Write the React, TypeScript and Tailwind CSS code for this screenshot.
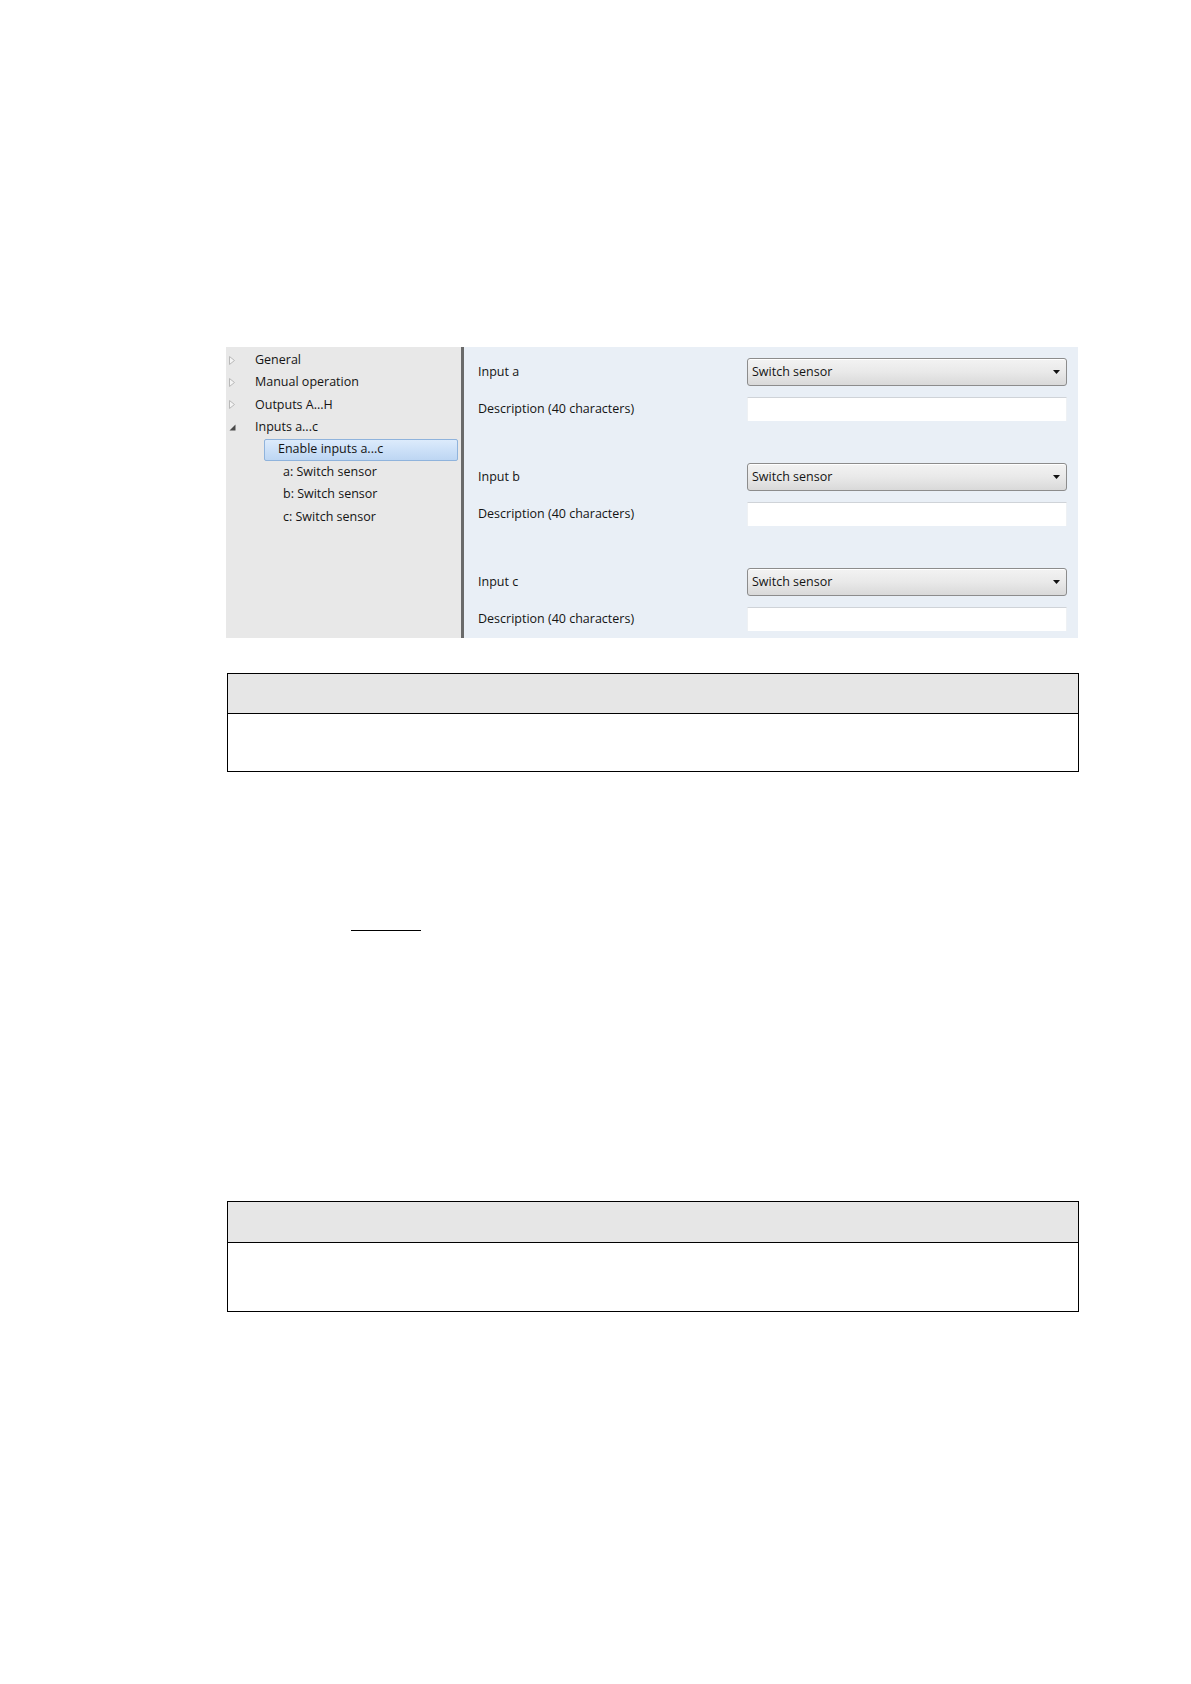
import React from 'react'

const font = { fontFamily: '"Open Sans", "Noto Sans", "Liberation Sans", sans-serif' }

function Collapsed() {
  return (
    <svg width="6" height="9" viewBox="0 0 6 9" aria-hidden="true">
      <polygon points="0.5,0.5 5.5,4.5 0.5,8.5" fill="#f4f4f4" stroke="#b8b8b8" strokeWidth="1" />
    </svg>
  )
}

function Expanded() {
  return (
    <svg width="7" height="7" viewBox="0 0 7 7" aria-hidden="true">
      <polygon points="6.5,0.5 6.5,6.5 0.5,6.5" fill="#4a4a4a" />
    </svg>
  )
}

function TreeRow({ label, icon }: { label: string; icon: 'closed' | 'open' }) {
  return (
    <div className="h-[22.4px] flex items-center">
      <div className="w-[29px] pl-[3px] flex items-center">
        {icon === 'closed' ? <Collapsed /> : <Expanded />}
      </div>
      <span>{label}</span>
    </div>
  )
}

function Dropdown() {
  return (
    <div className="h-[28px] rounded-[3px] border border-[#8c8c8c] bg-gradient-to-b from-[#f3f3f3] via-[#e9e9e9] to-[#d9d9d9] flex items-center justify-between pl-[4px] pr-[6px] shadow-[inset_0_1px_0_#ffffff]">
      <span>Switch sensor</span>
      <svg width="7" height="4" viewBox="0 0 7 4" aria-hidden="true">
        <polygon points="0,0 7,0 3.5,4" fill="#111" />
      </svg>
    </div>
  )
}

function Group({ name }: { name: string }) {
  return (
    <div className="grid grid-cols-[269px_320px] gap-y-[11px] items-center">
      <span>{name}</span>
      <Dropdown />
      <span>Description (40 characters)</span>
      <div className="h-[24px] bg-white border-t border-[#cfd3d8] border-x border-x-[#eef1f4]" />
    </div>
  )
}

function Table({ head, body }: { head: string; body: string }) {
  return (
    <div className="ml-[1px] w-[852px] border-[1.5px] border-black">
      <div className={`${head} bg-[#e6e6e6] border-b-[1.5px] border-black`} />
      <div className={`${body} bg-white`} />
    </div>
  )
}

export default function App() {
  return (
    <div className="w-[1191px] min-h-[1684px] bg-white text-[12.5px] text-[#141414]" style={font}>
      <div className="pl-[226px] pt-[347px]">
        <div className="w-[852px] h-[291px] flex">
          <div className="w-[235px] bg-[#e8e8e8] pt-[2px]">
            <TreeRow label="General" icon="closed" />
            <TreeRow label="Manual operation" icon="closed" />
            <TreeRow label="Outputs A...H" icon="closed" />
            <TreeRow label="Inputs a...c" icon="open" />
            <div className="h-[22.4px] flex items-center pl-[38px] pr-[3px]">
              <div className="w-full h-[22px] rounded-[2px] border border-[#8fb3dc] bg-gradient-to-b from-[#dcebfc] to-[#bdd6f3] flex items-center pl-[13px]">
                Enable inputs a...c
              </div>
            </div>
            {['a: Switch sensor', 'b: Switch sensor', 'c: Switch sensor'].map(t => (
              <div key={t} className="h-[22.4px] flex items-center pl-[57px]">
                {t}
              </div>
            ))}
          </div>
          <div className="w-[3px] bg-[#6a6a6a]" />
          <div className="flex-1 bg-[#e9eff6] pl-[14px] pr-[11px] pt-[11px] flex flex-col gap-[42px]">
            <Group name="Input a" />
            <Group name="Input b" />
            <Group name="Input c" />
          </div>
        </div>

        <div className="pt-[35px]">
          <Table head="h-[40px]" body="h-[57px]" />
        </div>

        <div className="pt-[158px] pl-[125px]">
          <div className="w-[70px] border-b-[1.5px] border-black" />
        </div>

        <div className="pt-[270px]">
          <Table head="h-[41px]" body="h-[68px]" />
        </div>
      </div>
    </div>
  )
}
